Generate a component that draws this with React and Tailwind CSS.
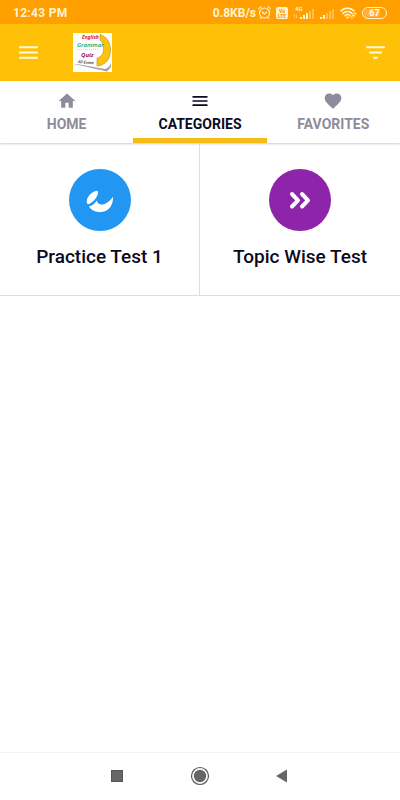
import { useState } from 'react'
import { MdHome, MdMenu, MdFavorite, MdFilterList } from 'react-icons/md'

const TABS = [
  { id: 'home',       label: 'HOME',       icon: MdHome },
  { id: 'categories', label: 'CATEGORIES', icon: MdMenu },
  { id: 'favorites',  label: 'FAVORITES',  icon: MdFavorite },
]

const CATEGORIES = [
  { title: 'Practice Test 1', cls: 'bg-[#2196f3]', icon: SwooshIcon },
  { title: 'Topic Wise Test', cls: 'bg-[#8e24aa]', icon: ChevronsIcon },
]

function SwooshIcon() {
  return (
    <svg className="size-7" viewBox="0 0 28 28" fill="currentColor" aria-hidden="true">
      <path d="M10.300 4.900c1.900-.3 2.100 1.900 1.100 4.300C9.800 13 6.300 16.800 2.200 18.300.6 17.800.4 15.500 1.100 13.200 2.500 8.900 6.600 5.400 10.300 4.900z" />
      <path d="M2.800 20.400C6 19.600 8.800 17.600 10.600 14.400c.9 2.700 2.500 4.100 4.900 4.100 4.200 0 8.200-3.200 11.500-7.800.6 7.100-3.700 14.800-11.800 15.400-5.200.4-9.600-1.700-12.400-5.700z" />
    </svg>
  )
}

function ChevronsIcon() {
  return (
    <svg className="size-7" viewBox="0 0 28 28" fill="none" stroke="currentColor" strokeWidth="4" strokeLinecap="round" strokeLinejoin="round" aria-hidden="true">
      <path d="M6 8l6 6.300-6 6.200M16 8l6 6.300-6 6.200" />
    </svg>
  )
}

function AlarmIcon() {
  return (
    <svg className="w-[13px] h-3.5" viewBox="0 0 13 14" fill="none" stroke="currentColor" strokeLinecap="round" aria-hidden="true">
      <circle cx="6.500" cy="7" r="5" strokeWidth="1.100" />
      <path d="M4.200 6l2.300 2 2.200-1.800M.8 2.700L3 .7M12.200 2.700L10 .7M2.300 12.500l.9-1M10.700 12.500l-.9-1" strokeWidth="1.100" />
    </svg>
  )
}

function VolteIcon() {
  return (
    <svg className="size-3" viewBox="0 0 12 12" aria-hidden="true">
      <rect x="0" y="0" width="12" height="12" rx="2" fill="currentColor" />
      <g fill="#ff9800" fontFamily="Roboto, sans-serif" fontWeight="900" fontSize="5" textAnchor="middle">
        <text x="6" y="5.500">Vo</text>
        <text x="6" y="10.500">LTE</text>
      </g>
    </svg>
  )
}

function SignalBars({ solid }) {
  return (
    <g fill="currentColor">
      {[2, 4, 6, 8, 10].map((h, i) => (
        <rect key={h} x={i * 3} y={12 - h} width="2" height={h} opacity={i < solid ? 1 : 0.4} />
      ))}
    </g>
  )
}

function Signal4G() {
  return (
    <svg className="w-[22px] h-[14px]" viewBox="0 0 22 14" aria-hidden="true">
      <text x="2" y="5" fill="currentColor" fontFamily="Roboto, sans-serif" fontWeight="700" fontSize="6">4G</text>
      <path d="M1.500 12V8.500M.5 9.500l1-1M3.500 8.500V12l1-1" stroke="currentColor" strokeWidth="0.700" opacity="0.700" fill="none" />
      <g transform="translate(7 1)"><SignalBars solid={3} /></g>
    </svg>
  )
}

function Signal() {
  return (
    <svg className="w-[15px] h-[14px]" viewBox="0 0 15 14" aria-hidden="true">
      <g transform="translate(0 1)"><SignalBars solid={2} /></g>
    </svg>
  )
}

function WifiIcon() {
  return (
    <svg className="w-[17px] h-3" viewBox="0 0 17 12" fill="none" stroke="currentColor" strokeLinecap="round" aria-hidden="true">
      <path d="M.9 4C4.600.2 10.400.2 14.100 4M3 6.400c2.600-2.600 6.400-2.600 9 0M5.200 8.600c1.400-1.300 3.200-1.300 4.600 0" strokeWidth="1.600" />
      <circle cx="7.500" cy="10.500" r="0.700" fill="currentColor" />
      <g strokeWidth="0.800">
        <ellipse cx="12.300" cy="9.700" rx="1.900" ry="1.100" transform="rotate(-45 12.300 9.700)" />
        <ellipse cx="14.500" cy="7.500" rx="1.900" ry="1.100" transform="rotate(-45 14.500 7.500)" />
      </g>
    </svg>
  )
}

function StatusBar() {
  return (
    <div className="flex items-center justify-between h-6 px-[13px] pt-px bg-[#ffa000] text-[#fff3d0]">
      <span className="text-[12px] leading-4 font-bold tracking-wide">12:43 PM</span>
      <div className="flex items-center gap-[5px]">
        <div className="flex items-center gap-0.5">
          <span className="text-[12px] leading-4 font-bold">0.8KB/s</span>
          <AlarmIcon />
        </div>
        <VolteIcon />
        <Signal4G />
        <Signal />
        <WifiIcon />
        <svg className="w-[25px] h-3" viewBox="0 0 25 12" role="img" aria-label="Battery 67%">
          <rect x="2" y="2" width="16" height="8" rx="3" fill="#ffb338" />
          <rect x="0.500" y="0.500" width="24" height="11" rx="5.500" fill="none" stroke="currentColor" />
          <text x="12.500" y="9" fill="#fff" fontFamily="Roboto, sans-serif" fontWeight="700" fontSize="9" textAnchor="middle">67</text>
        </svg>
      </div>
    </div>
  )
}

function Logo() {
  return (
    <svg className="size-[39px]" viewBox="0 0 39 39" role="img" aria-label="English Grammar Quiz All Exam">
      <rect width="39" height="39" fill="#fff" />
      <path d="M1 31l33 7.500 4-4.500V28L24 29z" fill="#a3a3a3" />
      <path d="M1 1h37v29c-1 3-3 5-6 6L1 30.500z" fill="#fff" />
      <path d="M27 1.500c7 2 10.500 8 10.500 15.500 0 9-5 15.500-13.500 16v-8c4-1 6.500-4 6.500-9 0-4-1-7-3.500-9z" fill="#ffc20a" stroke="#a8903c" strokeWidth="0.600" />
      <g fontFamily="'Open Sans', sans-serif" fontStyle="italic">
        <text x="9" y="6" fontWeight="700" fontSize="5" fill="#d4143c">English</text>
        <text x="4" y="14" fontWeight="600" fontSize="6" fill="#11a05a">Grammar</text>
        <text x="8" y="24" fontWeight="700" fontSize="6" fill="#a0105a">Quiz</text>
        <text x="5" y="30" fontSize="4" fontWeight="600" fill="#222" transform="rotate(5 5 30)">All Exam</text>
      </g>
      <path d="M4 16.500h21" stroke="#7fd0a5" strokeWidth="0.500" strokeDasharray="1 1" />
    </svg>
  )
}

function NavBar() {
  return (
    <nav aria-label="System" className="flex items-center justify-center gap-[65px] h-12 pb-0.5 border-t border-[#f3f3f3] text-[#666]">
      <button aria-label="Recent apps">
        <svg className="w-4 h-5" viewBox="0 0 16 20"><rect x="2.500" y="4.500" width="11" height="11" fill="#666" stroke="#555" /></svg>
      </button>
      <button aria-label="Home">
        <svg className="size-5" viewBox="0 0 20 20">
          <circle cx="10" cy="10" r="8.500" fill="none" stroke="#555" strokeWidth="1.200" />
          <circle cx="10" cy="10" r="6.200" fill="#666" />
        </svg>
      </button>
      <button aria-label="Back">
        <svg className="w-4 h-5" viewBox="0 0 16 20"><path d="M1 10l11-6.500v13z" fill="#666" /></svg>
      </button>
    </nav>
  )
}

export default function App() {
  const [active, setActive] = useState('categories')

  return (
    <div className="min-h-screen flex flex-col bg-white font-[Roboto,sans-serif]">
      <StatusBar />

      <header className="flex items-center h-[57px] pl-4 pr-3 bg-[#ffc107] text-[#fffbe0]">
        <button aria-label="Menu"><MdMenu size={25} /></button>
        <div className="ml-8"><Logo /></div>
        <button aria-label="Filter" className="ml-auto"><MdFilterList size={25} /></button>
      </header>

      <div role="tablist" className="grid grid-cols-3 shadow-[0_1px_2px_rgba(0,0,0,0.2)]">
        {TABS.map(t => {
          const Icon = t.icon
          const on = t.id === active
          return (
            <button
              key={t.id}
              role="tab"
              aria-selected={on}
              onClick={() => setActive(t.id)}
              className={`flex flex-col items-center pt-2.5 pb-[5px] border-b-[5px] ${on ? 'border-[#f6bd16] text-[#0a0a23]' : 'border-transparent text-[#8e8c9c]'}`}
            >
              <Icon size={20} />
              <span className="mt-1 text-[14px] leading-[18px] font-bold">{t.label}</span>
            </button>
          )
        })}
      </div>

      <main className="grow">
        <div className="grid grid-cols-2 border-b border-[#dedede]">
          {CATEGORIES.map(c => {
            const Icon = c.icon
            return (
              <button key={c.title} className="flex flex-col items-center pt-[26px] pb-[25px] first:border-r border-[#dedede] text-[#0a0a1e]">
                <span className={`flex items-center justify-center size-[62px] rounded-full text-white ${c.cls}`}>
                  <Icon />
                </span>
                <span className="mt-[13px] text-[19px] leading-[26px] font-medium">{c.title}</span>
              </button>
            )
          })}
        </div>
      </main>

      <NavBar />
    </div>
  )
}
